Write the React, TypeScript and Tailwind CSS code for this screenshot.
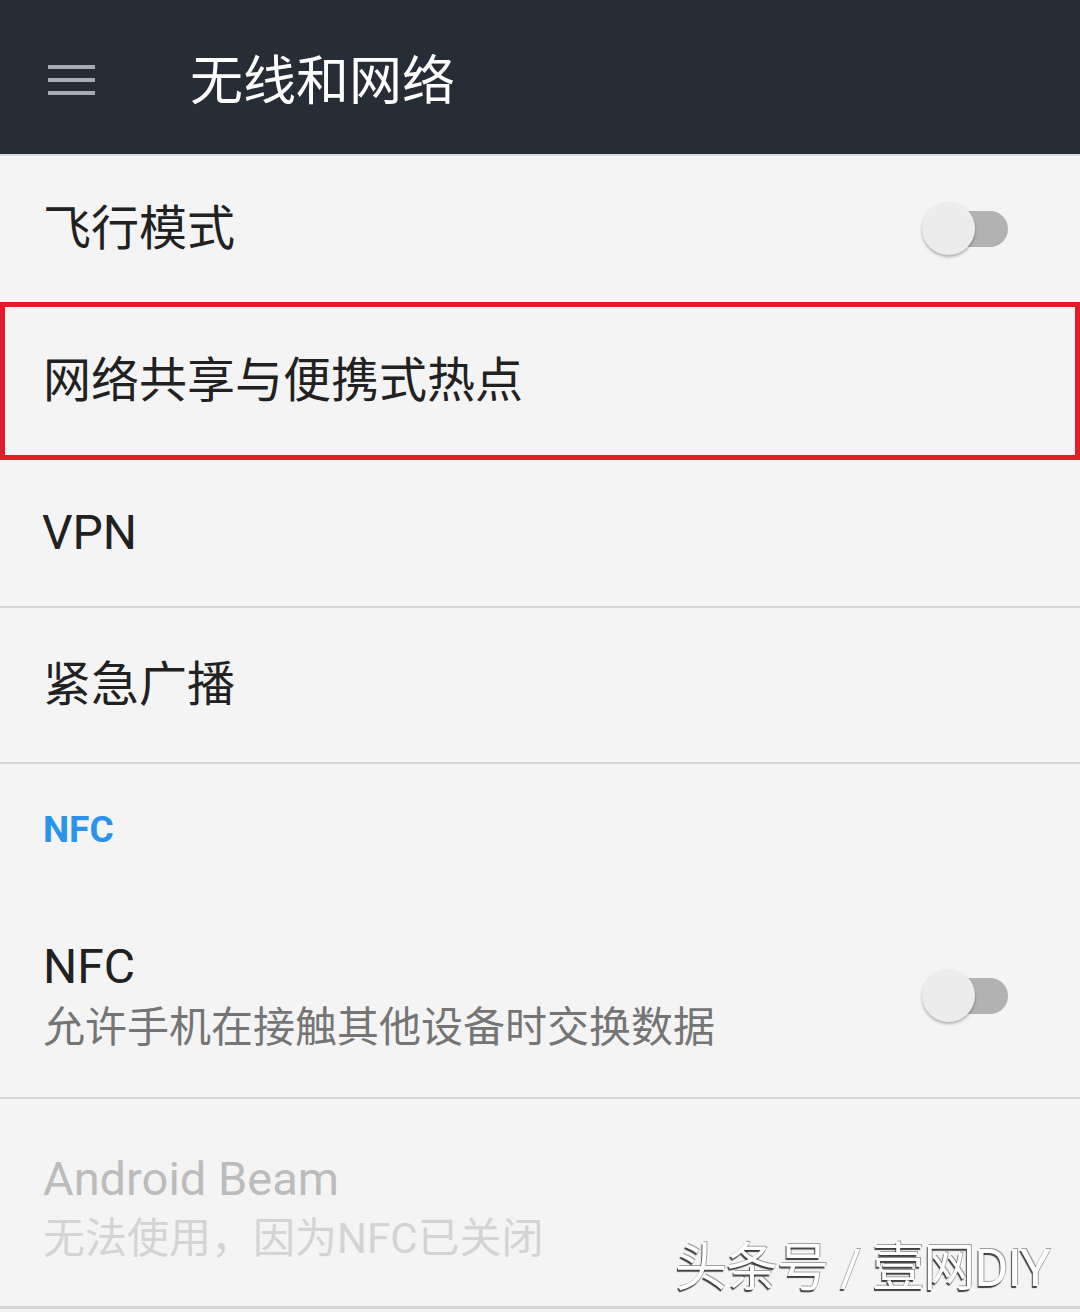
import React from 'react';

const font = { fontFamily: 'Roboto, "Noto Sans CJK SC", sans-serif' };

function Toggle() {
  return (
    <div className="relative w-[86px] h-[56px] shrink-0">
      <div className="absolute left-[8px] right-0 top-[10px] h-[36px] rounded-full bg-[#b2b2b2]" />
      <div className="absolute left-0 top-[1px] w-[53px] h-[53px] rounded-full bg-[#ececec] shadow-[0_2px_3px_rgba(0,0,0,0.28)]" />
    </div>
  );
}

function Divider() {
  return <div className="h-[2px] bg-[#d5d5d5]" />;
}

export default function App() {
  return (
    <div className="relative w-[1080px] h-[1312px] overflow-hidden bg-[#f4f4f4]" style={font}>
      {/* toolbar */}
      <header className="h-[154px] bg-[#262d37] flex items-center">
        <div className="ml-[48px] mt-[6px] w-[47px] flex flex-col gap-[8.5px]">
          <span className="h-[4.5px] bg-[#a8acb2]" />
          <span className="h-[4.5px] bg-[#a8acb2]" />
          <span className="h-[4.5px] bg-[#a8acb2]" />
        </div>
        <h1 className="ml-[95px] mt-[10px] text-[53px] leading-none text-white">无线和网络</h1>
      </header>
      <div className="h-[2px] bg-[#d6dde2]" />

      {/* 飞行模式 */}
      <div className="h-[146px] flex items-center justify-between pl-[43px] pr-[72px]">
        <span className="text-[48px] leading-none text-[#212121]">飞行模式</span>
        <Toggle />
      </div>

      {/* highlighted entry */}
      <div className="h-[158px] border-[5px] border-[#e11d2a] flex items-center pl-[38px]">
        <span className="text-[48px] leading-none text-[#212121]">网络共享与便携式热点</span>
      </div>

      <div className="h-[146px] flex items-center pl-[42px]">
        <span className="text-[48px] leading-none text-[#212121]">VPN</span>
      </div>
      <Divider />

      <div className="h-[154px] flex items-center pl-[43px]">
        <span className="text-[48px] leading-none text-[#212121]">紧急广播</span>
      </div>
      <Divider />

      {/* NFC category */}
      <div className="h-[131px] flex items-center pl-[43px]">
        <span className="text-[37px] leading-none font-bold text-[#2a93ea]">NFC</span>
      </div>

      <div className="h-[202px] flex items-center justify-between pl-[43px] pr-[72px]">
        <div className="flex flex-col gap-[16px]">
          <span className="text-[48px] leading-none text-[#212121]">NFC</span>
          <span className="text-[42px] leading-none text-[#757575]">允许手机在接触其他设备时交换数据</span>
        </div>
        <Toggle />
      </div>
      <Divider />

      <div className="h-[207px] flex items-center pl-[43px] pt-[10px]">
        <div className="flex flex-col gap-[16px]">
          <span className="text-[47px] leading-none text-[#bcbcbc]">Android Beam</span>
          <span className="text-[42px] leading-none text-[#d4d4d4]">无法使用，因为NFC已关闭</span>
        </div>
      </div>
      <div className="h-[3px] bg-[#d5d5d5]" />

      {/* watermark */}
      <div
        className="absolute left-[675px] top-[1243px] text-[52px] leading-none text-white tracking-[-1px]"
        style={{ textShadow: '-1px 2px 1px rgba(0,0,0,0.75), 1px -1px 0 rgba(0,0,0,0.35)' }}
      >
        头条号 / 壹网DIY
      </div>
    </div>
  );
}
